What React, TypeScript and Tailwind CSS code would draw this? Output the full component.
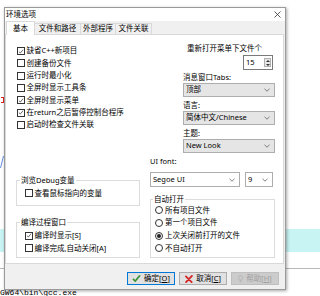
import React from 'react';

const Check = ({ checked }: { checked?: boolean }) => (
  <span className="flex h-[8px] w-[8px] shrink-0 items-center justify-center border border-[#333333] bg-white">
    {checked && (
      <svg viewBox="0 0 8 8" className="h-[7px] w-[7px]">
        <path d="M1.2 4.2 L3.1 6 L6.8 1.6" fill="none" stroke="#222222" strokeWidth="0.9" />
      </svg>
    )}
  </span>
);

const CheckRow = ({ checked, label, h }: { checked?: boolean; label: string; h: string }) => (
  <div className={`flex items-center gap-[1.5px] ${h}`}>
    <Check checked={checked} />
    <span className="whitespace-nowrap">{label}</span>
  </div>
);

const Radio = ({ on, label }: { on?: boolean; label: string }) => (
  <div className="flex h-[12.67px] items-center gap-[2px]">
    <span className="flex h-[8px] w-[8px] shrink-0 items-center justify-center rounded-full border border-[#333333] bg-white">
      {on && <span className="h-[4px] w-[4px] rounded-full bg-[#222222]" />}
    </span>
    <span className="whitespace-nowrap">{label}</span>
  </div>
);

const Chevron = () => (
  <svg viewBox="0 0 6 4" className="h-[4px] w-[6px] shrink-0">
    <path d="M0.5 0.8 L3 3.2 L5.5 0.8" fill="none" stroke="#606060" strokeWidth="0.8" />
  </svg>
);

const Combo = ({ value, white, className }: { value: string; white?: boolean; className: string }) => (
  <div
    className={`flex items-center justify-between border border-[#adadad] pl-[2px] pr-[4px] ${
      white ? 'bg-white' : 'bg-[#e5e5e5]'
    } ${className}`}
  >
    <span className="whitespace-nowrap">{value}</span>
    <Chevron />
  </div>
);

const Legend = ({ label, className }: { label: string; className: string }) => (
  <legend className={`h-[10px] px-[1px] leading-[10px] ${className}`}>{label}</legend>
);

const App = () => {
  return (
    <div className="relative h-[296px] w-[320px] overflow-hidden bg-white font-['Noto_Sans','Noto_Sans_CJK_SC',sans-serif] text-[7.5px] leading-none text-black">
      {/* background application */}
      <div className="absolute left-0 right-0 top-[229px] h-[23px] bg-[#c8f4f4]" />
      <div className="absolute left-0 right-0 top-[268px] h-px bg-[#b9b9b9]" />
      <div className="absolute left-[1px] top-[97px] h-[6px] w-[3px] border-y border-r border-[#e02020]" />
      <svg className="absolute left-0 top-[156px] h-[12px] w-[4px]" viewBox="0 0 4 12">
        <path d="M3.5 0 L0.5 12" stroke="#3a6fd8" strokeWidth="0.8" />
      </svg>
      <div className="absolute left-0 top-[288px] whitespace-nowrap font-['Liberation_Mono',monospace] text-[8px] leading-[10px]">
        GW64\bin\gcc.exe
      </div>

      {/* dialog window */}
      <div className="absolute left-[4px] top-[7px] flex h-[283px] w-[282px] flex-col border border-[#9a9a9a] bg-[#f0f0f0] shadow-[1px_1px_3px_rgba(0,0,0,0.35)]">
        <div className="flex h-[13px] items-center justify-between bg-white pl-[1px] pr-[4px]">
          <span>环境选项</span>
          <svg viewBox="0 0 7 7" className="h-[7px] w-[7px]">
            <path d="M0.5 0.5 L6.5 6.5 M6.5 0.5 L0.5 6.5" stroke="#333333" strokeWidth="0.8" />
          </svg>
        </div>

        <div className="flex h-[13px] items-end pl-[1px]">
          <div className="relative z-10 -mb-px flex h-[14px] w-[29px] items-center justify-center border border-b-0 border-[#d9d9d9] bg-white">
            基本
          </div>
          <div className="flex h-[11px] w-[46px] items-center justify-center border border-b-0 border-l-0 border-[#d9d9d9] bg-[#f0f0f0]">
            文件和路径
          </div>
          <div className="flex h-[11px] w-[35px] items-center justify-center border border-b-0 border-l-0 border-[#d9d9d9] bg-[#f0f0f0]">
            外部程序
          </div>
          <div className="flex h-[11px] w-[36px] items-center justify-center border border-b-0 border-l-0 border-[#d9d9d9] bg-[#f0f0f0]">
            文件关联
          </div>
        </div>

        <div className="mr-px flex h-[230px] gap-[10px] border border-[#d9d9d9] bg-white pl-[10px]">
          {/* left column */}
          <div className="flex w-[124px] flex-col pt-[10px]">
            <div className="pl-px">
              <CheckRow checked label="缺省C++新项目" h="h-[12.33px]" />
              <CheckRow label="创建备份文件" h="h-[12.33px]" />
              <CheckRow label="运行时最小化" h="h-[12.33px]" />
              <CheckRow label="全屏时显示工具条" h="h-[12.33px]" />
              <CheckRow checked label="全屏时显示菜单" h="h-[12.33px]" />
              <CheckRow checked label="在return之后暂停控制台程序" h="h-[12.33px]" />
              <CheckRow label="启动时检查文件关联" h="h-[12.33px]" />
            </div>

            <fieldset className="mt-[44px] h-[31px] border border-[#dcdcdc]">
              <Legend label="浏览Debug变量" className="ml-[3px]" />
              <div className="pl-[8px] pt-[2px]">
                <CheckRow label="查看鼠标指向的变量" h="h-[12px]" />
              </div>
            </fieldset>

            <fieldset className="mt-[11px] h-[41px] border border-[#dcdcdc]">
              <Legend label="编译过程窗口" className="ml-[3px]" />
              <div className="pl-[8px] pt-[2px]">
                <CheckRow checked label="编译时显示[S]" h="h-[12.67px]" />
                <CheckRow label="编译完成,自动关闭[A]" h="h-[12.67px]" />
              </div>
            </fieldset>
          </div>

          {/* right column */}
          <div className="flex w-[125px] flex-col pt-[9px]">
            <div className="flex h-[10px] items-center justify-end pr-[13px]">重新打开菜单下文件个</div>
            <div className="mr-[2px] mt-px flex h-[15px] w-[30px] items-stretch self-end border border-[#7a7a7a] bg-white">
              <span className="flex flex-1 items-center pl-[2px]">15</span>
              <div className="my-[2px] mr-[1px] flex w-[7px] flex-col items-center justify-center gap-[2px] border border-[#b0b0b0] bg-[#e8e8e8]">
                <svg viewBox="0 0 4 2" className="h-[2px] w-[4px]">
                  <path d="M0 2 L2 0 L4 2 Z" fill="#333333" />
                </svg>
                <svg viewBox="0 0 4 2" className="h-[2px] w-[4px]">
                  <path d="M0 0 L2 2 L4 0 Z" fill="#333333" />
                </svg>
              </div>
            </div>

            <div className="pl-[33px]">
              <div className="mt-[3px] flex h-[10px] items-center">消息窗口Tabs:</div>
              <Combo value="顶部" className="h-[14px]" />
              <div className="mt-[4px] flex h-[10px] items-center">语言:</div>
              <Combo value="简体中文/Chinese" className="h-[14px]" />
              <div className="mt-[4px] flex h-[10px] items-center">主题:</div>
              <Combo value="New Look" className="h-[14px]" />
            </div>

            <div className="mt-[4px] flex h-[10px] items-center">UI font:</div>
            <div className="mt-[5px] flex gap-[5px]">
              <Combo value="Segoe UI" white className="h-[15px] w-[90px]" />
              <Combo value="9" white className="h-[15px] w-[28px]" />
            </div>

            <fieldset className="mt-[7px] h-[64px] border border-[#dcdcdc]">
              <Legend label="自动打开" className="ml-[2px]" />
              <div className="pl-[4px]">
                <Radio label="所有项目文件" />
                <Radio label="第一个项目文件" />
                <Radio on label="上次关闭前打开的文件" />
                <Radio label="不自动打开" />
              </div>
            </fieldset>
          </div>
        </div>

        <div className="flex flex-1 items-start justify-end gap-[4px] pr-[6px] pt-[8px]">
          <button className="flex h-[13px] w-[48px] items-center justify-center gap-[3px] border border-[#0078d7] bg-[#e1e1e1]">
            <svg viewBox="0 0 10 9" className="h-[8px] w-[9px]">
              <path d="M0.8 5 L3.6 8 L9.4 0.8 L8 0.4 L3.5 6 L1.8 4 Z" fill="#2e9e2e" stroke="#1d6e1d" strokeWidth="0.4" />
            </svg>
            <span>
              确定[<span className="underline">O</span>]
            </span>
          </button>
          <button className="flex h-[13px] w-[48px] items-center justify-center gap-[3px] border border-[#adadad] bg-[#e1e1e1]">
            <svg viewBox="0 0 9 9" className="h-[8px] w-[8px]">
              <path d="M1 1.5 L7.5 8 M7.8 1 L1.2 8" stroke="#d42424" strokeWidth="2" strokeLinecap="round" />
            </svg>
            <span>
              取消[<span className="underline">C</span>]
            </span>
          </button>
          <button className="flex h-[13px] w-[48px] items-center justify-center gap-[3px] border border-[#bfbfbf] bg-[#cccccc] text-[#a0a0a0]">
            <svg viewBox="0 0 6 9" className="h-[8px] w-[5px]">
              <path d="M3 0.5 C1.4 0.5 0.5 1.6 0.5 2.9 C0.5 4.2 1.6 4.8 1.8 6 L4.2 6 C4.4 4.8 5.5 4.2 5.5 2.9 C5.5 1.6 4.6 0.5 3 0.5 Z M2 7 L4 7 M2.3 8.2 L3.7 8.2" fill="none" stroke="#a8a8a8" strokeWidth="0.7" />
            </svg>
            <span>
              帮助[<span className="underline">H</span>]
            </span>
          </button>
        </div>
      </div>
    </div>
  );
};

export default App;
